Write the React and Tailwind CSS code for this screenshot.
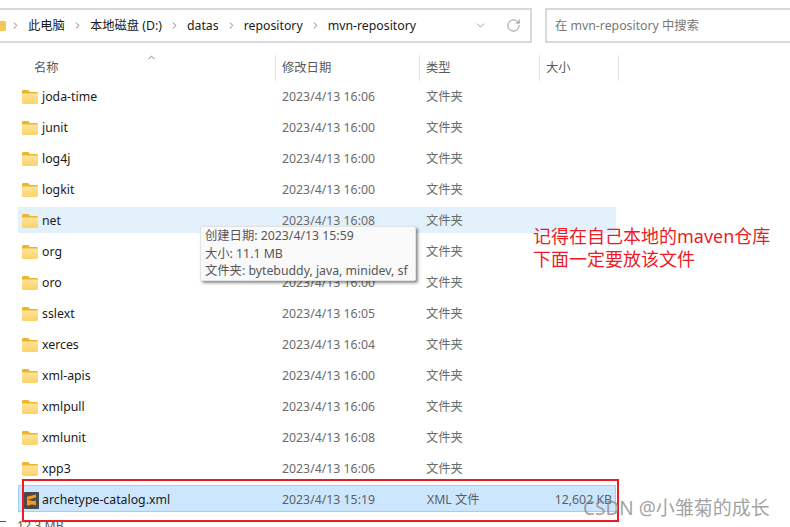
import { ChevronDown, ChevronRight, ChevronUp, RotateCw } from "lucide-react";

const rows = [
  { name: "joda-time", date: "2023/4/13 16:06" },
  { name: "junit", date: "2023/4/13 16:00" },
  { name: "log4j", date: "2023/4/13 16:00" },
  { name: "logkit", date: "2023/4/13 16:00" },
  { name: "net", date: "2023/4/13 16:08", hover: true },
  { name: "org", date: "2023/4/13 16:00" },
  { name: "oro", date: "2023/4/13 16:00" },
  { name: "sslext", date: "2023/4/13 16:05" },
  { name: "xerces", date: "2023/4/13 16:04" },
  { name: "xml-apis", date: "2023/4/13 16:00" },
  { name: "xmlpull", date: "2023/4/13 16:06" },
  { name: "xmlunit", date: "2023/4/13 16:08" },
  { name: "xpp3", date: "2023/4/13 16:06" },
];

const crumbs = ["此电脑", "本地磁盘 (D:)", "datas", "repository", "mvn-repository"];

const FolderIcon = () => (
  <svg width="16" height="14" viewBox="0 0 16 14" className="shrink-0">
    <defs>
      <linearGradient id="folderBody" x1="0" y1="0" x2="0" y2="1">
        <stop offset="0" stopColor="#fde59c" />
        <stop offset="1" stopColor="#fbd26a" />
      </linearGradient>
    </defs>
    <path d="M0 1.500C0 .7.6 0 1.400 0h4.200c.4 0 .7.1 1 .4L8 2h6.600c.8 0 1.400.6 1.400 1.400V4H0z" fill="#f0b429" />
    <path d="M0 3.500h16v9c0 .8-.6 1.400-1.400 1.400H1.400C.6 13.900 0 13.300 0 12.500z" fill="url(#folderBody)" />
  </svg>
);

const SublimeIcon = () => (
  <svg width="15" height="17" viewBox="0 0 15 17" className="shrink-0">
    <rect width="15" height="17" rx="1" fill="#4a4a48" />
    <path d="M3 4.800 12 2.500v3L3 8zM3 7.500 12 10v3.200L3 11zM3 11l9-2.600v2.800L3 13.800z" fill="#f59a23" />
  </svg>
);

const App = () => {
  return (
    <div className="relative w-[790px] h-[527px] overflow-hidden bg-white text-[12.3px] font-['Noto_Sans','Noto_Sans_CJK_SC',sans-serif]">
      {/* top bar */}
      <div className="flex gap-[13px] pt-2 pl-0 w-[800px]">
        <div className="flex items-center w-[532px] h-[35px] border-2 border-l-0 border-[#d9d9d9] text-[#1a1a1a]">
          <div className="w-[6px] h-[10px] bg-[#f6c55b] rounded-r-[1px] mr-[4px]" />
          {crumbs.map((c) => (
            <div key={c} className="flex items-center">
              <ChevronRight size={11} className="text-[#777] mr-[7px]" />
              <span className="mr-[7px] pt-[1px] whitespace-nowrap">{c}</span>
            </div>
          ))}
          <div className="ml-auto flex items-center gap-[19px] pr-[9px] text-[#777]">
            <ChevronDown size={13} strokeWidth={1.25} />
            <RotateCw size={15} strokeWidth={1.25} />
          </div>
        </div>
        <div className="flex items-center flex-1 h-[35px] border-2 border-r-0 border-[#d9d9d9] pl-[8px] pt-[2px] text-[#777]">
          在 mvn-repository 中搜索
        </div>
      </div>

      {/* column headers */}
      <div className="relative flex h-[26px] mt-[12px] ml-[3px] text-[#5a5a5a]">
        <ChevronUp size={11} className="absolute left-[143px] -top-[3px] text-[#777]" />
        <div className="w-[272px] pl-[31px] leading-[26px]">名称</div>
        <div className="w-[144px] pl-[6px] leading-[26px] border-l border-[#e5e5e5]">修改日期</div>
        <div className="w-[120px] pl-[6px] leading-[26px] border-l border-[#e5e5e5]">类型</div>
        <div className="w-[80px] pl-[6px] leading-[26px] border-x border-[#e5e5e5]">大小</div>
      </div>

      {/* file rows */}
      <div className="flex flex-col gap-[5px] mt-[2px] ml-[18px] w-[598px]">
        {rows.map((r) => (
          <div
            key={r.name}
            className={`flex items-center h-[26px] pl-[4px] pt-[2px] ${r.hover ? "bg-[#e3f1fc]" : ""}`}
          >
            <FolderIcon />
            <span className="ml-[4px] w-[240px] text-[#1a1a1a]">{r.name}</span>
            <span className="w-[144px] text-[#6b6b6b]">{r.date}</span>
            <span className="text-[#6b6b6b]">文件夹</span>
          </div>
        ))}
        <div className="flex items-center h-[27px] -mt-[1px] pl-[5px] pr-[3px] pt-[4px] bg-[#cce6fd] border border-[#9ed0f7]">
          <SublimeIcon />
          <span className="ml-[3px] w-[240px] text-[#1a1a1a]">archetype-catalog.xml</span>
          <span className="w-[144px] text-[#5f5f5f]">2023/4/13 15:19</span>
          <span className="pl-[1px] text-[#5f5f5f]">XML 文件</span>
          <span className="ml-auto text-[#5f5f5f]">12,602 KB</span>
        </div>
      </div>

      {/* status bar, cut off by the bottom edge */}
      <div className="absolute left-0 top-[517px] flex gap-[11px] text-[#555]">
        <span className="w-[6px] h-[10px] mt-[4px] border-t border-b border-[#555]" />
        <span>12.3 MB</span>
      </div>

      {/* tooltip */}
      <div className="absolute left-[200px] top-[226px] w-[216px] h-[55px] px-[4px] bg-[#f9f9f9] border border-[#e3e3e3] rounded-[2px] shadow-[2px_2px_3px_rgba(0,0,0,0.45)] text-[#575757] leading-[17.500px] whitespace-nowrap">
        <div>创建日期: 2023/4/13 15:59</div>
        <div>大小: 11.1 MB</div>
        <div>文件夹: bytebuddy, java, minidev, sf</div>
      </div>

      {/* annotation */}
      <div className="absolute left-[533px] top-[225px] text-[18px] leading-[23px] text-[#ed1c24] whitespace-nowrap">
        <div>记得在自己本地的maven仓库</div>
        <div>下面一定要放该文件</div>
      </div>
      <div className="absolute left-[22px] top-[479px] w-[597px] h-[43px] border-2 border-[#ed1c24]" />

      {/* watermark */}
      <div className="absolute left-[583px] top-[494px] text-[19px] leading-[28px] text-[#8a8a8a]/80 whitespace-nowrap">
        CSDN @小雏菊的成长
      </div>
    </div>
  );
};

export default App;
